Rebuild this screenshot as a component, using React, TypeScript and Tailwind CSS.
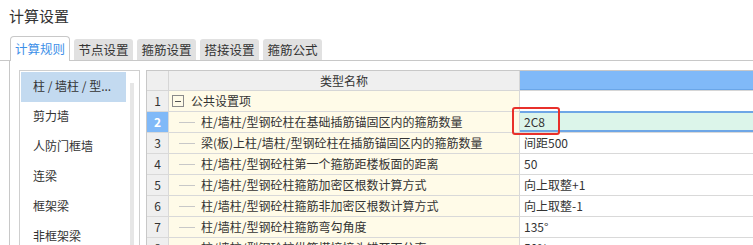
const FONT = { fontFamily: '"Noto Sans CJK SC", "Liberation Sans", sans-serif' };

const tabs = ['计算规则', '节点设置', '箍筋设置', '搭接设置', '箍筋公式'];

const categories = ['柱 / 墙柱 / 型...', '剪力墙', '人防门框墙', '连梁', '框架梁', '非框架梁'];

const rows = [
  { name: '柱/墙柱/型钢砼柱在基础插筋锚固区内的箍筋数量', value: '2C8' },
  { name: '梁(板)上柱/墙柱/型钢砼柱在插筋锚固区内的箍筋数量', value: '间距500' },
  { name: '柱/墙柱/型钢砼柱第一个箍筋距楼板面的距离', value: '50' },
  { name: '柱/墙柱/型钢砼柱箍筋加密区根数计算方式', value: '向上取整+1' },
  { name: '柱/墙柱/型钢砼柱箍筋非加密区根数计算方式', value: '向上取整-1' },
  { name: '柱/墙柱/型钢砼柱箍筋弯勾角度', value: '135°' },
  { name: '柱/墙柱/型钢砼柱纵筋搭接接头错开百分率', value: '50%' },
];

export default function App() {
  return (
    <div className="w-[753px] h-[245px] overflow-hidden bg-white text-[#333]" style={FONT}>
      <div className="h-[36px] pl-[9px] pt-[4px] text-[15px] leading-[24px] text-[#333]">计算设置</div>

      {/* tabs */}
      <div className="flex items-end h-[25px] pl-[10px] gap-[4px] border-b border-[#c8c8c8]">
        {tabs.map((t, i) =>
          i === 0 ? (
            <div
              key={t}
              className="relative -mb-px h-[25px] w-[60px] rounded-t-[4px] border border-b-0 border-[#c8c8c8] bg-white text-[12.5px] leading-[23px] text-center text-[#3d8fe8]"
            >
              {t}
            </div>
          ) : (
            <div
              key={t}
              className="h-[21px] w-[59px] rounded-t-[3px] bg-[#e1e1e1] text-[12.5px] leading-[21px] text-center text-[#333]"
            >
              {t}
            </div>
          )
        )}
      </div>

      {/* panel */}
      <div className="ml-[9px] h-[200px] border-l border-[#c8c8c8] pl-[9px] pt-[9px] flex gap-[6px]">
        {/* category list */}
        <div className="relative w-[121px] h-[200px] border border-[#cfcfcf] bg-white p-px">
          {categories.map((c, i) => (
            <div
              key={c}
              className={
                'h-[30px] w-[105px] pl-[12px] text-[12px] leading-[28px] whitespace-nowrap ' +
                (i === 0 ? 'bg-[#c3daf0]' : '')
              }
            >
              {c}
            </div>
          ))}
          <div className="absolute left-[110px] top-[12px] w-[4px] h-[200px] bg-[#e6e6e6]" />
        </div>

        {/* table */}
        <div className="flex-1 overflow-hidden border-l border-t border-[#c8c8c8] text-[12px]">
          <div className="flex h-[20px] border-b border-[#d6d6d6]">
            <div className="w-[22px] shrink-0 bg-[#efefef] border-r border-[#d6d6d6]" />
            <div className="w-[351px] shrink-0 bg-[#efefef] border-r border-[#d6d6d6] text-center leading-[19px]">
              类型名称
            </div>
            <div className="flex-1 bg-[#80b9f8] border-b border-[#6aa6e8]" />
          </div>

          <div className="flex h-[21px] border-b border-[#d9d9d9]">
            <div className="w-[22px] shrink-0 bg-[#efefef] border-r border-[#d9d9d9] text-center leading-[20px]">1</div>
            <div className="w-[351px] shrink-0 bg-[#fffbe8] border-r border-[#d9d9d9] flex items-center pl-[3px]">
              <span className="w-[12px] h-[12px] border border-[#8a8a8a] flex items-center justify-center">
                <span className="w-[6px] h-px bg-[#555]" />
              </span>
              <span className="ml-[7px] leading-[20px]">公共设置项</span>
            </div>
            <div className="flex-1 bg-white" />
          </div>

          {rows.map((r, i) => {
            const selected = i === 0;
            return (
              <div key={r.name} className="flex h-[21px] border-b border-[#d9d9d9]">
                <div
                  className={
                    'w-[22px] shrink-0 border-r border-[#d9d9d9] text-center leading-[20px] ' +
                    (selected ? 'bg-[#80b9f8] text-white font-bold' : 'bg-[#efefef]')
                  }
                >
                  {i + 2}
                </div>
                <div className="w-[351px] shrink-0 bg-[#fffbe8] border-r border-[#d9d9d9] flex items-center pl-[10px] whitespace-nowrap">
                  <span className="w-[16px] h-px bg-[#c8c8c8]" />
                  <span className="ml-[6px] leading-[20px]">{r.name}</span>
                </div>
                {selected ? (
                  <div className="relative flex-1 -mt-px h-[21px] border-y-2 border-[#6ea6e6] bg-[#dcf5ea] pl-[4px] leading-[17px]">
                    {r.value}
                    <div className="absolute left-[-8px] top-[-6px] w-[48px] h-[28px] rounded-[3px] border-2 border-[#e8302b]" />
                  </div>
                ) : (
                  <div className="flex-1 bg-white pl-[4px] leading-[20px]">{r.value}</div>
                )}
              </div>
            );
          })}
        </div>
      </div>
    </div>
  );
}
